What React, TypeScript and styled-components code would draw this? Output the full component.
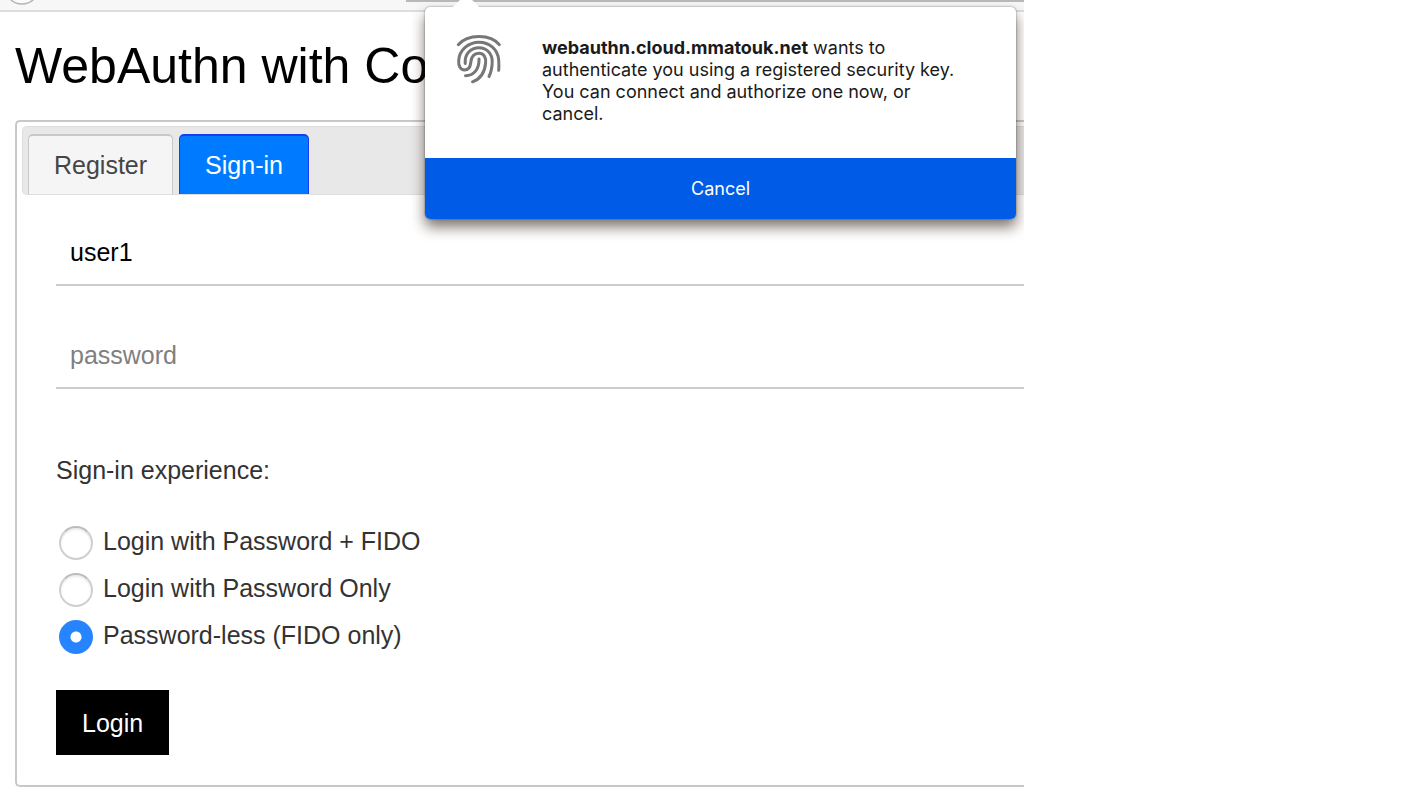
import React, { useState } from "react";
import styled, { createGlobalStyle } from "styled-components";

const GlobalStyle = createGlobalStyle`
  * { box-sizing: border-box; }
  body {
    margin: 0;
    background: #fff;
    color: #333;
    font-family: "Liberation Sans", Arial, sans-serif;
    font-size: 25px;
    line-height: 30px;
  }
  button, input { font: inherit; }
`;

const Page = styled.div`
  position: relative;
  margin-right: 400px;
  overflow: hidden;
  padding-bottom: 10px;
`;

const BrowserBar = styled.div`
  height: 12px;
  display: flex;
  justify-content: space-between;
  background: #f7f7f7;
  border-bottom: 2px solid #dedede;
`;

const AddressEdge = styled.div`
  width: 618px;
  height: 2px;
  background: #b9b9b9;
`;

const Title = styled.h1`
  margin: 0;
  padding: 24px 0 24px 15px;
  color: #000;
  font-size: 50px;
  font-weight: 400;
  line-height: 60px;
  white-space: nowrap;
`;

const Panel = styled.section`
  margin-left: 15px;
  padding: 4px 0 30px 5px;
  border: 2px solid #c8c8c8;
  border-right: 0;
  border-radius: 5px 0 0 5px;
`;

const TabList = styled.div`
  display: flex;
  gap: 6px;
  height: 69px;
  padding: 7px 0 0 5px;
  background: #e8e8e8;
  border: 1px solid #dedede;
  border-right: 0;
  border-radius: 5px 0 0 5px;
`;

const Tab = styled.button<{ $active?: boolean }>`
  padding: 0 25px;
  border: solid ${(p) => (p.$active ? "#1a3cf0" : "#c8c8c8")};
  border-width: 2px 1px 0;
  border-radius: 5px 5px 0 0;
  background: ${(p) => (p.$active ? "#007bff" : "#f5f5f5")};
  color: ${(p) => (p.$active ? "#fff" : "#454545")};
`;

const Form = styled.form`
  display: flex;
  flex-direction: column;
  padding: 25px 0 0 34px;
`;

const Field = styled.input`
  width: 100%;
  height: 66px;
  margin-bottom: 37px;
  padding: 0 14px;
  border: 0;
  border-bottom: 2px solid #ccc;
  border-radius: 0;
  background: none;
  color: #000;
  outline: none;
  &::placeholder { color: #808080; opacity: 1; }
`;

const Options = styled.fieldset`
  display: flex;
  flex-direction: column;
  margin: 29px 0 0;
  padding: 0;
  border: 0;
`;

const Legend = styled.legend`
  margin: 0 0 34px;
  padding: 0;
`;

const Option = styled.label`
  display: flex;
  align-items: center;
  gap: 10px;
  height: 47px;
  padding-left: 3px;
`;

const OptionText = styled.span`
  padding-bottom: 4px;
`;

const Radio = styled.input`
  appearance: none;
  flex: none;
  width: 34px;
  height: 34px;
  margin: 0;
  border: 2px solid #cfcfcf;
  border-top-color: #bcbcbc;
  border-radius: 50%;
  background: #fff;
  box-shadow: inset 0 2px 2px #ececec;
  &:checked {
    border: 0;
    background: radial-gradient(circle, #fff 5px, #2684ff 6px);
    box-shadow: none;
  }
`;

const LoginButton = styled.button`
  align-self: flex-start;
  height: 65px;
  margin-top: 30px;
  padding: 0 26px;
  border: 0;
  background: #000;
  color: #fff;
`;

const Popup = styled.div`
  position: absolute;
  top: 7px;
  right: 8px;
  width: 591px;
  border-radius: 5px;
  background: #fff;
  box-shadow: 0 0 2px rgba(0, 0, 0, 0.5), 0 8px 14px rgba(40, 25, 15, 0.6);
  color: #1a1a1a;
  font-family: Inter, sans-serif;
  font-optical-sizing: none;
  font-size: 18px;
  line-height: 22px;
`;

const PopupArrow = styled.svg`
  position: absolute;
  top: -7px;
  left: 26px;
`;

const PopupBody = styled.div`
  display: flex;
  gap: 32px;
  height: 151px;
  padding: 30px 40px 0 25px;
`;

const Fingerprint = styled.svg`
  flex: none;
  margin-top: -9px;
`;

const Message = styled.p`
  margin: 0;
`;

const CancelButton = styled.button`
  display: block;
  width: 100%;
  height: 61px;
  border: 0;
  border-radius: 0 0 5px 5px;
  background: #005ce6;
  color: #fff;
`;

const choices = [
  "Login with Password + FIDO",
  "Login with Password Only",
  "Password-less (FIDO only)",
];

export default function App() {
  const [choice, setChoice] = useState(2);
  const [user, setUser] = useState("user1");
  return (
    <>
      <GlobalStyle />
      <Page>
        <BrowserBar>
          <svg width="44" height="10" aria-hidden="true">
            <circle cx="22" cy="-13" r="17" fill="#fbfbfb" stroke="#b5b5b5" strokeWidth="1.5" />
          </svg>
          <AddressEdge />
        </BrowserBar>
        <Title>WebAuthn with Co</Title>
        <Panel>
          <TabList role="tablist">
            <Tab role="tab" type="button" aria-selected="false">Register</Tab>
            <Tab role="tab" type="button" aria-selected="true" $active>Sign-in</Tab>
          </TabList>
          <Form onSubmit={(e) => e.preventDefault()}>
            <Field
              aria-label="username"
              value={user}
              onChange={(e) => setUser(e.target.value)}
            />
            <Field type="password" aria-label="password" placeholder="password" />
            <Options>
              <Legend>Sign-in experience:</Legend>
              {choices.map((text, i) => (
                <Option key={text}>
                  <Radio
                    type="radio"
                    name="experience"
                    checked={choice === i}
                    onChange={() => setChoice(i)}
                  />
                  <OptionText>{text}</OptionText>
                </Option>
              ))}
            </Options>
            <LoginButton type="submit">Login</LoginButton>
          </Form>
        </Panel>
        <Popup role="dialog" aria-label="Security key request">
          <PopupArrow width="30" height="8" aria-hidden="true">
            <path d="M0 8C3 7 5 3 9 0H21C25 3 27 7 30 8Z" fill="#fff" />
          </PopupArrow>
          <PopupBody>
            <Fingerprint width="60" height="60" viewBox="0 0 60 60" fill="none" stroke="#777" strokeWidth="3" strokeLinecap="round" aria-hidden="true">
              <path d="M8.300 16.700C13 11.200 20.500 8.500 29 8.500S45 11.200 49.300 16.700" />
              <path d="M48.700 42.300C49 39 49 36 48.700 32C47.800 21.500 39.500 14.300 29 14.300S9.300 22 8.700 32.500C8.300 38 10.500 42 14.500 42C18.500 42 20.300 39 20.800 34.500C21.300 28.500 24.500 25.300 29 25.300C34 25.300 36.200 29.500 35.600 35C34.800 44 30.500 51 22.500 53.800" />
              <path d="M15.200 35.500C14.600 26 20.500 19.800 29 19.800C37.500 19.800 42.200 26.500 42.200 33.500C42.200 39.500 41.200 44 39 48.500" />
              <path d="M29 31C29.300 40.500 24.500 47.500 15.500 47.700" />
            </Fingerprint>
            <Message>
              <b>webauthn.cloud.mmatouk.net</b> wants to authenticate you using a
              registered security key. You can connect and authorize one now, or
              cancel.
            </Message>
          </PopupBody>
          <CancelButton type="button">Cancel</CancelButton>
        </Popup>
      </Page>
    </>
  );
}
